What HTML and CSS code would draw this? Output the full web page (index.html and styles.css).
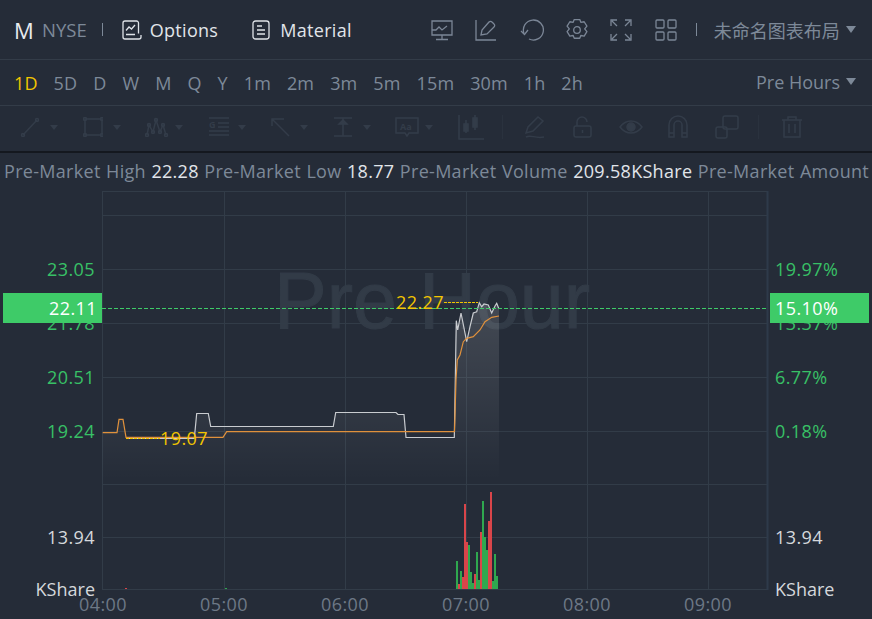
FILE: index.html
```html
<!DOCTYPE html>
<html lang="en">

<head>
    <meta charset="UTF-8">
    <title>Pre Hour Chart</title>
    <link rel="stylesheet" href="styles.css">
</head>

<body>
    <!-- Top bar -->
    <div class="topbar">
        <div class="symbol">M</div>
        <div class="market">NYSE</div>
        <div class="sep sep-left"></div>
        <div class="tab tab-options">
            <svg width="20" height="20" viewBox="0 0 20 20" fill="none" stroke="#dfe3e8" stroke-width="1.300"><path d="M16.500 13.500V3A2 2 0 0 0 14.500 1H3A2 2 0 0 0 1 3v14a2 2 0 0 0 2 2h14a2 2 0 0 0 2-2v-2"/><path d="M4 10.500l3-3.500 2.500 2L13 5M4 14.500h9"/></svg>
            <span>Options</span>
        </div>
        <div class="tab tab-material">
            <svg width="18" height="20" viewBox="0 0 18 20" fill="none" stroke="#dfe3e8" stroke-width="1.300"><rect x="1" y="1" width="16" height="18" rx="2.500"/><path d="M5 6h5M5 10h8M5 14h8"/></svg>
            <span>Material</span>
        </div>
        <div class="top-icons">
            <svg width="22" height="22" viewBox="0 0 22 22" fill="none" stroke="#7b8696" stroke-width="1.300"><path d="M1 2h20v14H1zM11 16v4M5 20.500h12"/><path d="M1 11h4l3-3 3 3 5-4"/></svg>
            <svg width="22" height="22" viewBox="0 0 22 22" fill="none" stroke="#7b8696" stroke-width="1.300"><path d="M1 1v20h20"/><path d="M6 16l1-5 7-8a2 2 0 0 1 3 0l2 2a2 2 0 0 1 0 3l-7 7z"/></svg>
            <svg width="24" height="22" viewBox="0 0 24 22" fill="none" stroke="#7b8696" stroke-width="1.300"><path d="M4 14.500A10 10 0 1 1 9 20"/><path d="M1 12l3.500 3.500L8 11"/></svg>
            <svg width="22" height="22" viewBox="2 1 20 20" fill="none" stroke="#7b8696" stroke-width="1.200"><path d="M9.500 1.500h5l1 2.500 3-.500 2.500 4-2 2.500 2 2.500-2.500 4-3-.500-1 2.500h-5l-1-2.500-3 .500-2.500-4 2-2.500-2-2.500 2.500-4 3 .500z" stroke-linejoin="round"/><circle cx="12" cy="11" r="3"/></svg>
            <svg width="22" height="22" viewBox="0 0 22 22" fill="none" stroke="#7b8696" stroke-width="1.300"><path d="M1 7V1h6M15 1h6v6M21 15v6h-6M7 21H1v-6M2 2l5 5M20 2l-5 5M20 20l-5-5M2 20l5-5"/></svg>
            <svg width="22" height="22" viewBox="0 0 22 22" fill="none" stroke="#7b8696" stroke-width="1.300"><rect x="1" y="1" width="8" height="8" rx="1"/><rect x="13" y="1" width="8" height="8" rx="1"/><rect x="1" y="13" width="8" height="8" rx="1"/><rect x="13" y="13" width="8" height="8" rx="1"/></svg>
        </div>
        <div class="sep sep-right"></div>
        <div class="layout-name">未命名图表布局</div>
        <div class="caret"></div>
    </div>

    <!-- Periods -->
    <div class="periods">
        <span class="period active">1D</span>
        <span class="period">5D</span>
        <span class="period">D</span>
        <span class="period">W</span>
        <span class="period">M</span>
        <span class="period">Q</span>
        <span class="period">Y</span>
        <span class="period">1m</span>
        <span class="period">2m</span>
        <span class="period">3m</span>
        <span class="period">5m</span>
        <span class="period">15m</span>
        <span class="period">30m</span>
        <span class="period">1h</span>
        <span class="period">2h</span>
        <span class="pre-hours">Pre Hours</span>
        <div class="caret"></div>
    </div>

    <!-- Drawing tools, all disabled -->
    <div class="tools">
        <div class="tool"><svg width="20" height="20" viewBox="0 0 20 20"><path d="M3 18L17 3"/><circle cx="3" cy="18" r="1.500"/><circle cx="17" cy="3" r="1.500"/></svg><i></i></div>
        <div class="tool"><svg width="20" height="20" viewBox="0 0 20 20"><rect x="2" y="2" width="17" height="16"/><circle cx="2" cy="2" r="1.500"/><circle cx="19" cy="2" r="1.500"/><circle cx="2" cy="18" r="1.500"/><circle cx="19" cy="18" r="1.500"/></svg><i></i></div>
        <div class="tool"><svg width="24" height="20" viewBox="0 0 24 20"><path d="M2 18L4 8l4 7 3-12 4 12 3-7 3 10"/><circle cx="2" cy="18" r="1.500"/><circle cx="4" cy="8" r="1.500"/><circle cx="8" cy="15" r="1.500"/><circle cx="11" cy="3" r="1.500"/><circle cx="15" cy="15" r="1.500"/><circle cx="18" cy="8" r="1.500"/><circle cx="21" cy="18" r="1.500"/></svg><i></i></div>
        <div class="tool"><svg width="22" height="20" viewBox="0 0 22 20"><path d="M1 1h20M10 6h11M10 10h11M1 14h20M1 18h20"/><text x="1" y="11" class="tool-text">G</text></svg><i></i></div>
        <div class="tool"><svg width="20" height="20" viewBox="0 0 20 20"><path d="M2 9V2h12M2 2l17 17"/></svg><i></i></div>
        <div class="tool"><svg width="20" height="20" viewBox="0 0 20 20"><path d="M1 1h18M1 19h18M10 1v18"/><path class="tool-solid" d="M6 7l4-4 4 4z"/></svg><i></i></div>
        <div class="tool"><svg width="24" height="20" viewBox="0 0 24 20"><path d="M1 1h22v15H14l-2 3-2-3H1z"/><text x="5" y="12.500" class="tool-text">Aa</text></svg><i></i></div>
        <div class="tool-plain tool-candle"><svg width="26" height="26" viewBox="0 0 26 26"><path d="M1 1v24h25M8 6v13M17 1v15"/><rect class="tool-solid" x="6" y="10" width="4" height="7"/><rect class="tool-solid" x="15" y="4" width="4" height="9"/></svg></div>
        <div class="tool-sep sep-a"></div>
        <div class="tool-plain tool-pen"><svg width="22" height="24" viewBox="0 0 22 24"><path d="M2 18l2-6 10-10 5 4-10 10zM2 22c5-3 9 2 18 0"/></svg></div>
        <div class="tool-plain tool-lock"><svg width="20" height="24" viewBox="0 0 20 24"><rect x="1" y="11" width="17" height="11" rx="2"/><path d="M4 11V7a5 5 0 0 1 10 0M9.500 15v3"/></svg></div>
        <div class="tool-plain tool-eye"><svg width="24" height="24" viewBox="0 0 24 24"><path d="M1 12c6-8 16-8 22 0-6 8-16 8-22 0z"/><circle class="tool-solid" cx="12" cy="12" r="4"/></svg></div>
        <div class="tool-plain tool-magnet"><svg width="20" height="24" viewBox="0 0 20 24"><path d="M1 22V10a9 9 0 0 1 18 0v12h-5V10a4 4 0 0 0-8 0v12zM1 18h5M14 18h5"/></svg></div>
        <div class="tool-plain tool-copy"><svg width="24" height="24" viewBox="0 0 24 24"><rect x="8" y="1" width="15" height="13" rx="2"/><rect x="1" y="12" width="11" height="11" rx="2"/></svg></div>
        <div class="tool-sep sep-b"></div>
        <div class="tool-plain tool-trash"><svg width="22" height="24" viewBox="0 0 22 24"><path d="M1 5h20M7 5V2h8v3M3 5v17h16V5M8 9v9M14 9v9"/></svg></div>
    </div>

    <!-- Pre-market stats -->
    <div class="stats">
        <span>Pre-Market High</span> <b>22.28</b>
        <span>Pre-Market Low</span> <b>18.77</b>
        <span>Pre-Market Volume</span> <b>209.58KShare</b>
        <span>Pre-Market Amount</span>
    </div>

    <!-- Chart -->
    <div class="chart">
        <div class="watermark">Pre Hour</div>
        <svg class="plot" width="872" height="428" viewBox="0 191 872 428">
            <defs>
                <linearGradient id="fade" gradientUnits="userSpaceOnUse" x1="0" y1="303" x2="0" y2="480">
                    <stop offset="0" stop-color="#fff" stop-opacity="0.14"/>
                    <stop offset="1" stop-color="#fff" stop-opacity="0"/>
                </linearGradient>
            </defs>
            <g class="grid">
                <path d="M102 191.500H768M102 215.500H768M102 269.500H768M102 323.500H768M102 377.500H768M102 431.500H768M102 484.500H768M102 537.500H768M102 589.500H768"/>
                <path d="M102.500 191V590M224.500 191V590M345.500 191V590M466.500 191V590M587.500 191V590M708.500 191V590"/>
                <path class="grid-edge" d="M767.500 191V590"/>
            </g>
            <path fill="url(#fade)" d="M102 433H117L119 419H123L126 438H194L197 413H208L211 426H333L336 412H396L398 414H404L406 437H454L456 320L458 330L461 313L463 323L467 342L470 327L473 313L477 312L479 303L482 307L484 304L488 305L492 313L495 306L497 303L499 309V480H102Z"/>
            <path class="price" d="M126 438.500H194.300L196.700 413.500H208.300L210.700 426.500H333.300L335.700 412.500H396L398 414.500H404L406 437.500H454.300L456.300 320.700L457.700 330L461 313L463 323L466.700 341.700L470 326.700L473.300 313L476.700 311.700L479.300 302.700L481.700 306.700L484 304L488.300 305L491.700 313L495 306L496.700 303.300L499 309"/>
            <path class="avg" d="M102.700 432.700H117L119 419.300H123L126 437.300H223L226.700 431.700H454.500L456 380L457.300 360L460 355L463.300 341.700L466.700 338.300L473.300 336.700L480 330L485 321.700L491.700 317.300L499 316"/>
            <path class="marker" d="M444 302.500H478M126 438.500H160"/>
            <path class="last-line" d="M102 308.500H767"/>
            <path class="vol-up" d="M456 561h2v28h-2zM460 571h2v18h-2zM468 545h2v44h-2zM470 572h2v17h-2zM472 583h2v6h-2zM476 552h2v37h-2zM478 580h2v9h-2zM482 501h2v88h-2zM484 537h2v52h-2zM486 550h2v39h-2zM492 581h2v8h-2zM494 554h2v35h-2zM496 576h2v13h-2zM225 588h2v1h-2z"/>
            <path class="vol-down" d="M458 584h2v5h-2zM462 577h2v12h-2zM464 504h2v85h-2zM466 542h2v47h-2zM474 574h2v15h-2zM480 532h2v57h-2zM488 521h2v68h-2zM490 492h2v97h-2zM125 588h2v1h-2z"/>
        </svg>

        <div class="y-label up left l1">23.05</div>
        <div class="y-label up left l2">21.78</div>
        <div class="y-label up left l3">20.51</div>
        <div class="y-label up left l4">19.24</div>
        <div class="y-label left l5">13.94</div>
        <div class="y-label unit left l6">KShare</div>

        <div class="y-label up right l1">19.97%</div>
        <div class="y-label up right l2">13.37%</div>
        <div class="y-label up right l3">6.77%</div>
        <div class="y-label up right l4">0.18%</div>
        <div class="y-label right l5">13.94</div>
        <div class="y-label unit right l6">KShare</div>

        <div class="last-tag tag-left">22.11</div>
        <div class="last-tag tag-right">15.10%</div>

        <div class="note note-high">22.27</div>
        <div class="note note-low">19.07</div>

        <div class="time t1">04:00</div>
        <div class="time t2">05:00</div>
        <div class="time t3">06:00</div>
        <div class="time t4">07:00</div>
        <div class="time t5">08:00</div>
        <div class="time t6">09:00</div>
    </div>
</body>

</html>
```

FILE: styles.css
```css
* {
    box-sizing: border-box;
}

html,
body {
    margin: 0;
    height: 619px;
    overflow: hidden;
}

body {
    background-color: #252c38;
    font-family: "Open Sans", "Noto Sans CJK SC", sans-serif;
    color: #7d8998;
    font-size: 18px;
}

.topbar {
    display: flex;
    align-items: center;
    height: 60px;
    padding-left: 14px;
    border-bottom: 1px solid #333c48;
}

.symbol {
    width: 19px;
    font-size: 22px;
    color: #e8ebef;
}

.market {
    margin-left: 9px;
    font-size: 18.500px;
}

.sep {
    width: 1px;
    height: 13px;
    background-color: #7d8998;
}

.sep-left {
    margin-left: 15px;
}

.sep-right {
    margin-left: 19px;
}

.tab {
    display: flex;
    align-items: center;
    gap: 8px;
    letter-spacing: 0.300px;
    color: #e1e5ea;
}

.tab-options {
    margin-left: 19px;
}

.tab-material {
    gap: 10px;
    margin-left: 34px;
}

.top-icons {
    display: flex;
    align-items: center;
    gap: 22.400px;
    margin-left: 79px;
}

.layout-name {
    margin-left: 17px;
    font-size: 18px;
    white-space: nowrap;
}

.caret {
    width: 0;
    height: 0;
    margin-left: 6px;
    border-left: 5.500px solid transparent;
    border-right: 5.500px solid transparent;
    border-top: 7px solid #7d8998;
}

.periods {
    display: flex;
    align-items: center;
    height: 46px;
    padding-left: 14px;
    border-bottom: 1px solid #333c48;
}

.period {
    margin-right: 16px;
    letter-spacing: 0.120px;
}

.period.active {
    color: #f2c500;
}

.pre-hours {
    margin-left: auto;
    margin-bottom: 2px;
}

.periods .caret {
    margin-right: 16px;
    margin-bottom: 2px;
}

.tools {
    display: flex;
    align-items: center;
    height: 47px;
    padding-left: 20px;
    padding-bottom: 3px;
    border-bottom: 2px solid #14181f;
}

.tools svg {
    display: block;
    fill: none;
    stroke: #333c49;
    stroke-width: 1.500;
}

.tools .tool-solid {
    fill: #333c49;
}

.tools .tool-text {
    font-size: 9px;
    font-weight: 700;
    fill: #333c49;
    stroke: none;
}

.tool {
    display: grid;
    grid-template-columns: 30px 8px;
    align-items: center;
    width: 62.500px;
}

.tool i {
    width: 0;
    height: 0;
    border-left: 4px solid transparent;
    border-right: 4px solid transparent;
    border-top: 5px solid #333c49;
}

.tool-sep {
    width: 1px;
    height: 24px;
    background-color: #2a323e;
}

.tool-candle {
    margin-right: 18px;
}

.sep-a {
    margin-right: 21px;
}

.tool-pen {
    margin-right: 27px;
}

.tool-lock {
    margin-right: 26px;
}

.tool-eye {
    margin-right: 25px;
}

.tool-magnet {
    margin-right: 27px;
}

.tool-copy {
    margin-right: 19px;
}

.sep-b {
    margin-right: 22px;
}

.stats {
    height: 38px;
    padding-left: 4px;
    line-height: 36px;
    letter-spacing: 0.300px;
    word-spacing: 0.500px;
    white-space: nowrap;
    overflow: hidden;
}

.stats b {
    font-weight: 400;
    color: #e1e5ea;
}

.chart {
    position: relative;
    height: 428px;
    letter-spacing: 0.400px;
}

.plot {
    position: absolute;
    left: 0;
    top: 0;
}

.grid path {
    fill: none;
    stroke: #323c48;
    stroke-width: 1;
}

.grid .grid-edge {
    stroke: #2e3a4a;
    stroke-width: 2;
}

.price {
    fill: none;
    stroke: #c9ccd0;
    stroke-width: 1.200;
}

.avg {
    fill: none;
    stroke: #e0913c;
    stroke-width: 1.200;
}

.marker {
    fill: none;
    stroke: #f2c500;
    stroke-width: 1;
    stroke-dasharray: 3 1;
}

.last-line {
    fill: none;
    stroke: #3ecb68;
    stroke-width: 1;
    stroke-dasharray: 4 2;
}

.vol-up {
    fill: #2fa84f;
}

.vol-down {
    fill: #d9454a;
}

.watermark {
    position: absolute;
    left: 274px;
    top: 65px;
    font-family: "Liberation Sans", sans-serif;
    font-size: 79px;
    line-height: 90px;
    letter-spacing: 0;
    color: #323b47;
    -webkit-text-stroke: 1px #323b47;
    white-space: nowrap;
}

.y-label {
    position: absolute;
    line-height: 24px;
    color: #d5d8dc;
}

.y-label.up {
    color: #38c066;
}

.y-label.unit {
    letter-spacing: 0;
}

.y-label.left {
    right: 777px;
}

.y-label.right {
    left: 775px;
}

.l1 {
    top: 66px;
}

.l2 {
    top: 120px;
}

.l3 {
    top: 174px;
}

.l4 {
    top: 228px;
}

.l5 {
    top: 334px;
}

.l6 {
    top: 386px;
}

.last-tag {
    position: absolute;
    top: 102px;
    height: 30px;
    line-height: 30px;
    background-color: #3ecb68;
    color: #fff;
}

.tag-left {
    left: 3px;
    width: 99px;
    padding-right: 5px;
    text-align: right;
}

.tag-right {
    left: 770px;
    width: 99px;
    padding-left: 5px;
}

.note {
    position: absolute;
    line-height: 24px;
    color: #f2c500;
}

.note-high {
    left: 396px;
    top: 99px;
}

.note-low {
    left: 160px;
    top: 235px;
}

.time {
    position: absolute;
    top: 401px;
    width: 60px;
    margin-left: -30px;
    text-align: center;
    line-height: 24px;
    color: #6d7886;
}

.t1 {
    left: 103px;
}

.t2 {
    left: 224px;
}

.t3 {
    left: 345px;
}

.t4 {
    left: 466px;
}

.t5 {
    left: 587px;
}

.t6 {
    left: 708px;
}
```
